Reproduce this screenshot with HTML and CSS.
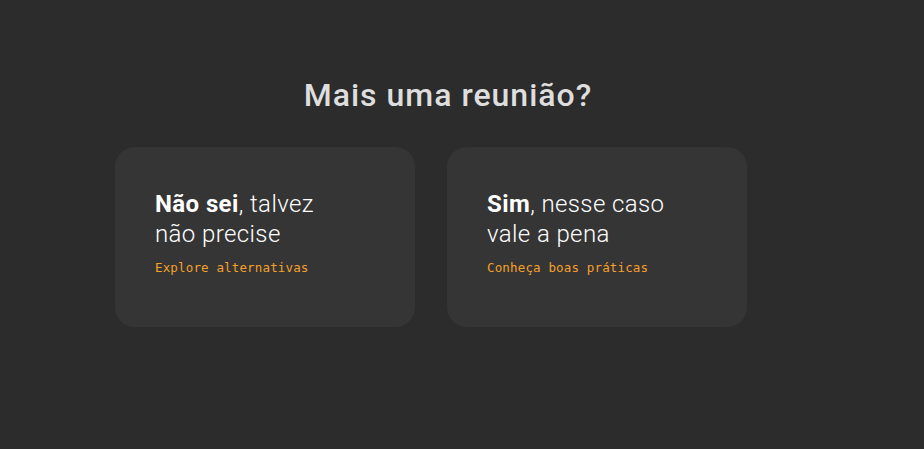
FILE: index.html
```html
<!DOCTYPE html>
<html lang="pt-BR">
<head>
    <meta charset="UTF-8">
    <meta name="viewport" content="width=device-width, initial-scale=1.0">
    <title>Mais uma reunião?</title>
    <link rel="stylesheet" href="styles.css">
</head>
<body>
    <main class="page">
        <h1 class="title">Mais uma reunião?</h1>

        <div class="options">
            <a class="option-card" href="#">
                <p class="option-text"><strong>Não sei</strong>, talvez<br>não precise</p>
                <span class="option-link">Explore alternativas</span>
            </a>
            <a class="option-card" href="#">
                <p class="option-text"><strong>Sim</strong>, nesse caso<br>vale a pena</p>
                <span class="option-link">Conheça boas práticas</span>
            </a>
        </div>
    </main>
</body>
</html>
```

FILE: styles.css
```css
body {
    margin: 0;
    padding: 0;
    background-color: #2c2c2c;
    font-family: Roboto, 'Noto Sans', sans-serif;
}

.page {
    padding-top: 77px;
}

.title {
    margin: 0;
    padding-right: 28px;
    text-align: center;
    font-size: 32px;
    line-height: 36px;
    font-weight: 500;
    letter-spacing: 1px;
    color: #dedede;
}

.options {
    display: flex;
    gap: 32px;
    padding-left: 115px;
    margin-top: 34px;
}

.option-card {
    display: block;
    box-sizing: border-box;
    width: 300px;
    height: 180px;
    padding: 42px 40px 0 40px;
    background-color: #353535;
    border-radius: 20px;
    text-decoration: none;
}

.option-text {
    margin: 0;
    font-size: 24px;
    line-height: 30px;
    font-weight: 300;
    letter-spacing: 0.4px;
    color: #ffffff;
}

.option-text strong {
    font-weight: 700;
}

.option-link {
    display: block;
    margin-top: 11px;
    font-family: 'DejaVu Sans Mono', 'Liberation Mono', monospace;
    font-size: 12.5px;
    line-height: 16px;
    letter-spacing: 0.15px;
    color: #f5a02a;
}
```
